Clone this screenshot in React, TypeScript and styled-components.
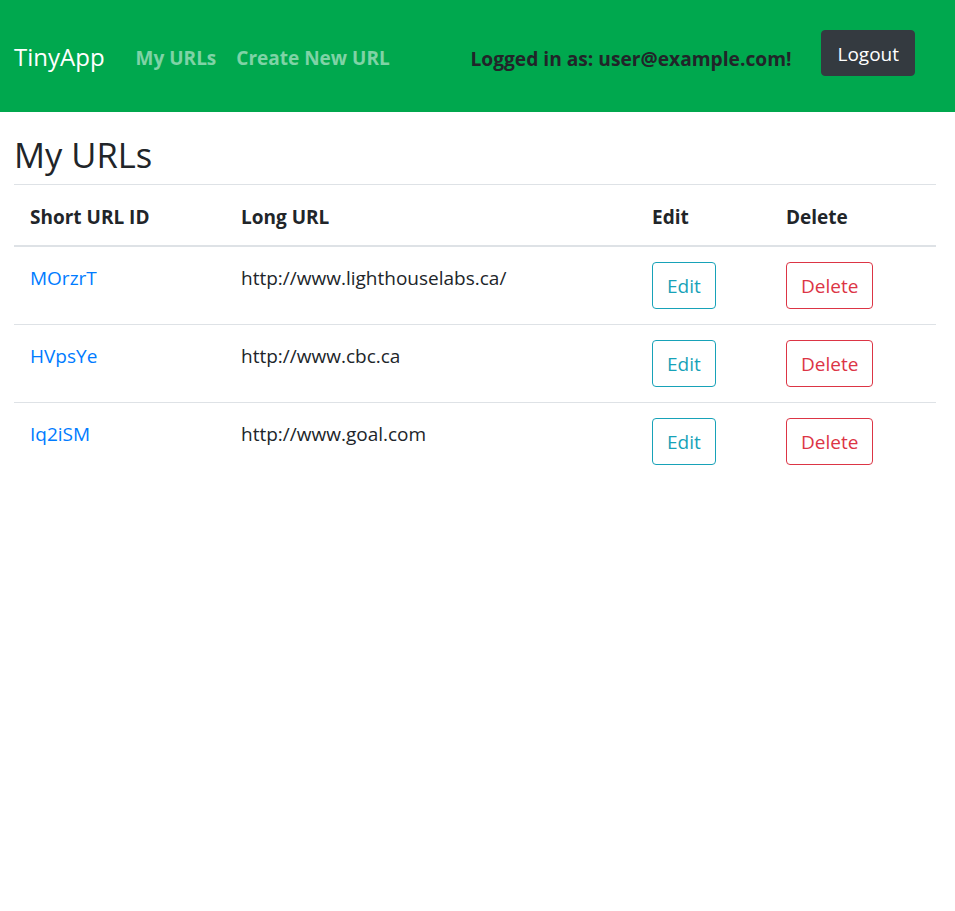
import React from "react";
import styled, { createGlobalStyle } from "styled-components";

const Global = createGlobalStyle`
  html, body { margin: 0; padding: 0; background: #fff; }
  body {
    font-family: "Open Sans", "Noto Sans", "Liberation Sans", sans-serif;
    font-size: 19px;
    color: #212529;
  }
  * { box-sizing: border-box; }
`;

const Navbar = styled.nav`
  height: 112px;
  background: #00a84e;
  display: flex;
  align-items: center;
  padding: 0 40px 0 14px;
`;

const Brand = styled.a`
  color: #fff;
  font-size: 24px;
  margin-right: 21px;
  text-decoration: none;
  line-height: 1;
  padding-top: 2px;
`;

const NavLink = styled.a`
  color: rgba(255, 255, 255, 0.5);
  font-weight: 700;
  padding: 3px 10px 0;
  text-decoration: none;
  font-size: 19px;
`;

const Right = styled.div`
  margin-left: auto;
  display: flex;
  align-items: center;
  gap: 30px;
`;

const LoggedIn = styled.span`
  font-weight: 700;
  color: #212529;
  font-size: 19.2px;
  padding-top: 4px;
`;

const Button = styled.button<{ $variant: "dark" | "info" | "danger" }>`
  font-family: inherit;
  font-size: 19px;
  line-height: 29px;
  padding: 9px 14px 7px;
  border-radius: 4px;
  cursor: pointer;
  border: 1px solid
    ${(p) => (p.$variant === "dark" ? "#343a40" : p.$variant === "info" ? "#17a2b8" : "#dc3545")};
  background: ${(p) => (p.$variant === "dark" ? "#343a40" : "transparent")};
  color: ${(p) => (p.$variant === "dark" ? "#fff" : p.$variant === "info" ? "#17a2b8" : "#dc3545")};
`;

const LogoutButton = styled(Button)`
  line-height: 28px;
  padding: 9px 15px 7px;
  margin-bottom: 6px;
`;

const Main = styled.main`
  padding: 0 19px 0 14px;
`;

const Title = styled.h2`
  margin: 22px 0 9px;
  font-size: 34.5px;
  font-weight: 500;
  line-height: 1.2;
`;

const Table = styled.table`
  width: 100%;
  border-collapse: collapse;
`;

const Th = styled.th<{ $w: number }>`
  width: ${(p) => p.$w}px;
  text-align: left;
  font-weight: 700;
  padding: 18px 16px 14px;
  line-height: 28px;
  border-top: 1px solid #dee2e6;
  border-bottom: 2px solid #dee2e6;
  vertical-align: bottom;
`;

const Td = styled.td`
  padding: 15px 16px 15px;
  line-height: 28px;
  vertical-align: top;
  border-top: 1px solid #dee2e6;
`;

const TextTd = styled(Td)`
  padding-top: 17px;
`;

const Link = styled.a`
  color: #007bff;
  text-decoration: none;
`;

const rows = [
  { id: "MOrzrT", url: "http://www.lighthouselabs.ca/" },
  { id: "HVpsYe", url: "http://www.cbc.ca" },
  { id: "Iq2iSM", url: "http://www.goal.com" },
];

export default function App() {
  return (
    <>
      <Global />
      <Navbar>
        <Brand href="#">TinyApp</Brand>
        <NavLink href="#">My URLs</NavLink>
        <NavLink href="#">Create New URL</NavLink>
        <Right>
          <LoggedIn>Logged in as: user@example.com!</LoggedIn>
          <LogoutButton $variant="dark">Logout</LogoutButton>
        </Right>
      </Navbar>
      <Main>
        <Title>My URLs</Title>
        <Table>
          <thead>
            <tr>
              <Th $w={211}>Short URL ID</Th>
              <Th $w={411}>Long URL</Th>
              <Th $w={134}>Edit</Th>
              <Th $w={166}>Delete</Th>
            </tr>
          </thead>
          <tbody>
            {rows.map((r) => (
              <tr key={r.id}>
                <TextTd>
                  <Link href="#">{r.id}</Link>
                </TextTd>
                <TextTd>{r.url}</TextTd>
                <Td>
                  <Button $variant="info">Edit</Button>
                </Td>
                <Td>
                  <Button $variant="danger">Delete</Button>
                </Td>
              </tr>
            ))}
          </tbody>
        </Table>
      </Main>
    </>
  );
}
